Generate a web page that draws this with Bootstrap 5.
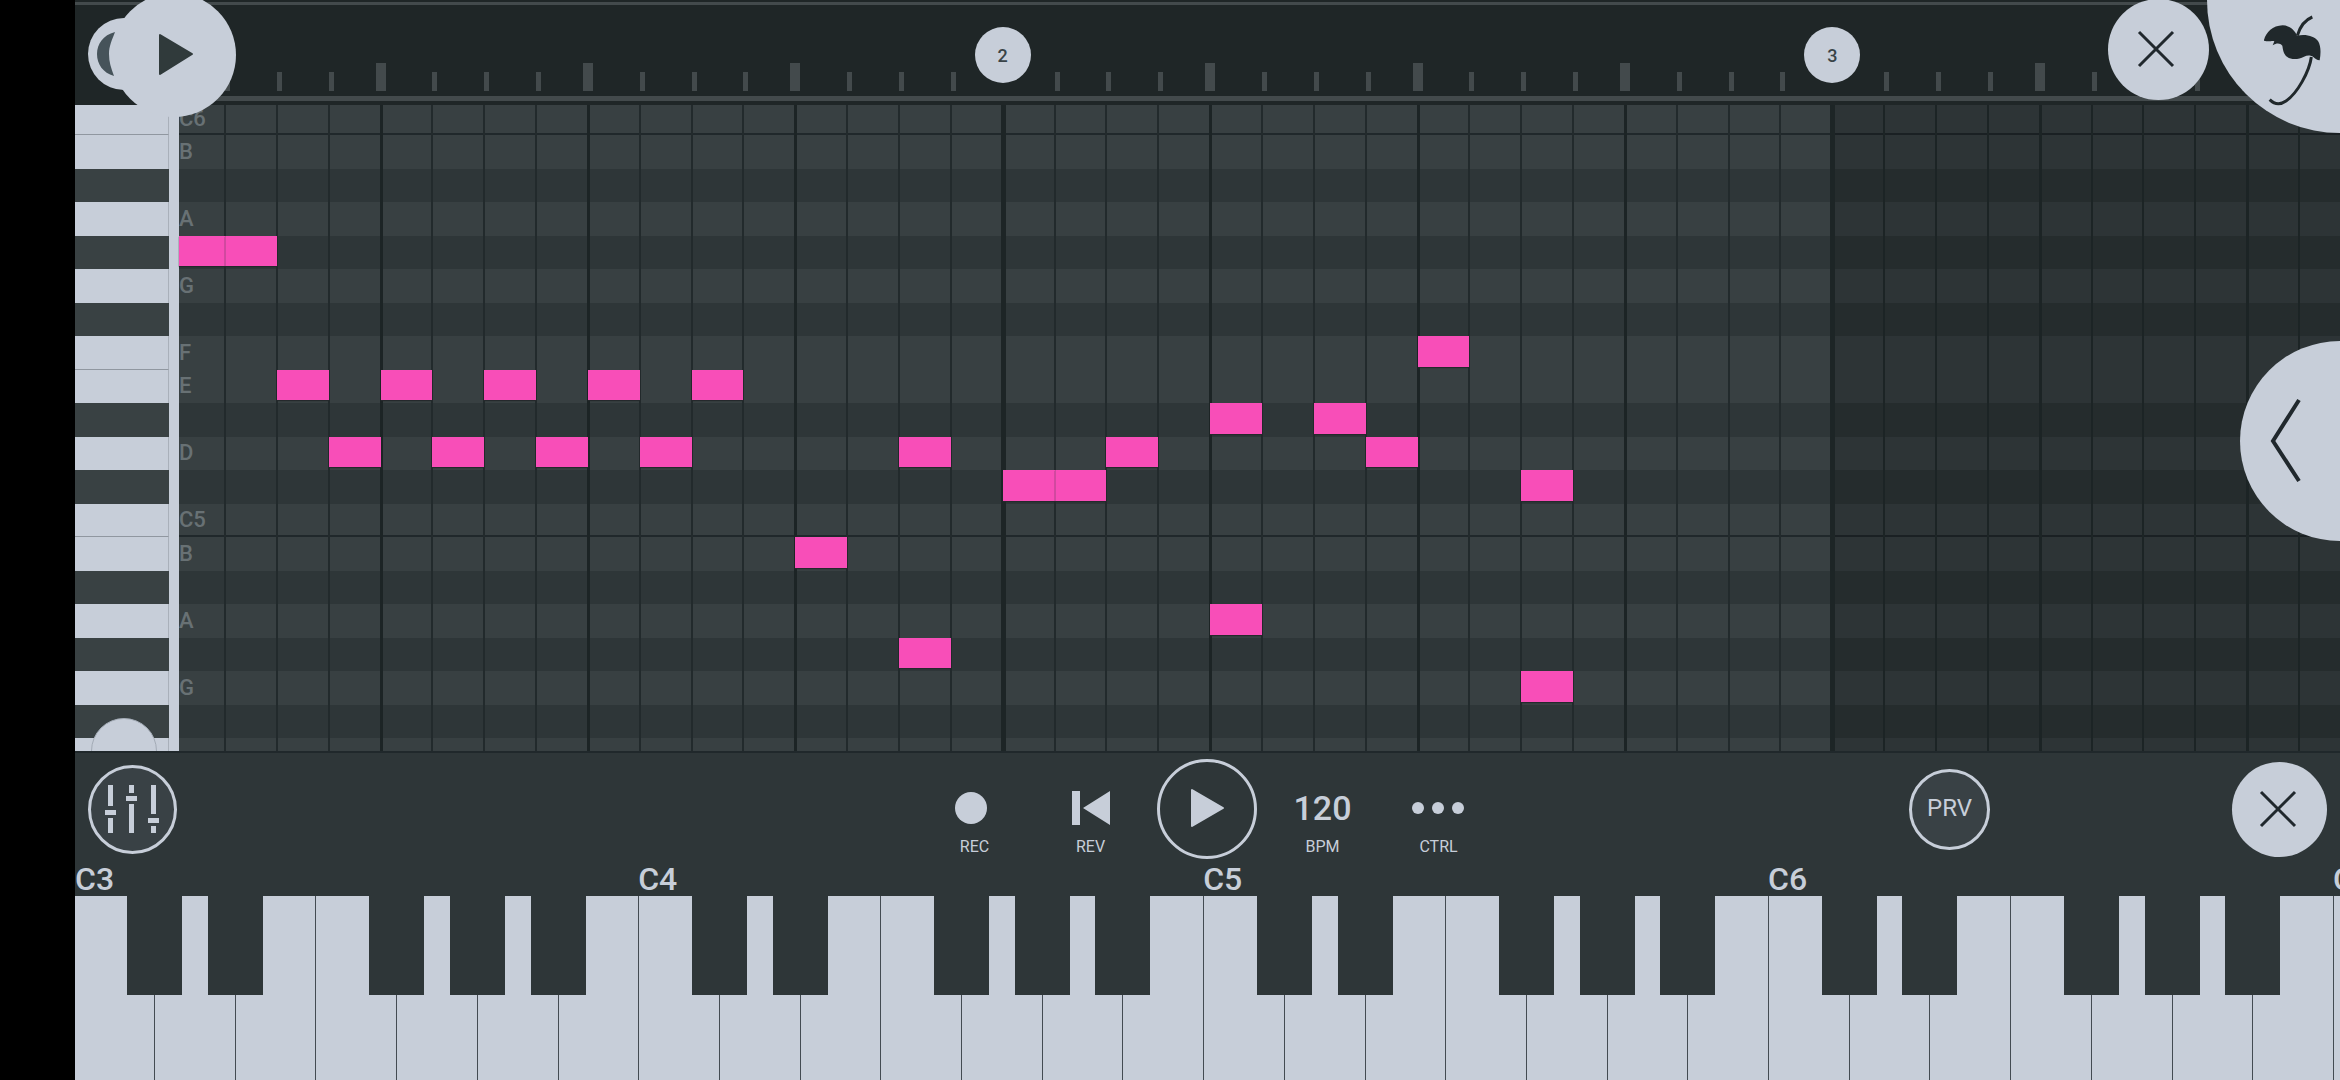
<!DOCTYPE html>
<html lang="en">
<head>
<meta charset="utf-8">
<meta name="viewport" content="width=device-width, initial-scale=1">
<title>Piano roll</title>
<link href="https://cdn.jsdelivr.net/npm/bootstrap@5.3.0/dist/css/bootstrap.min.css" rel="stylesheet">
<style>
:root{--light:#c7ced9;--panel:#2e3638;--ink:#20282b;--line:#434a4c;--row:#384042;--pink:#f84eb8}
body{background:#000;font-family:Roboto,"Liberation Sans",sans-serif;color:var(--light)}
.app{padding-left:75px;overflow:hidden}
button{border:0;padding:0;background:none;color:inherit}
.disc{border-radius:50%;background:var(--light);color:var(--ink)}
svg{display:block}

/* ruler and note grid share one set of columns */
.steps{display:grid;grid-template-columns:46px repeat(40,minmax(0,1fr)) 41px}
.pitches{display:grid;grid-template-rows:30px repeat(18,minmax(0,1fr)) 13px}
.timebar{height:105px;background:#1f2627;padding:2px 0 4px;z-index:3}
.timebar-in{border-top:3px solid var(--line)}
.ruler{margin-left:104px;border-bottom:5px solid var(--line);padding-bottom:5px}
.tick{grid-row:1;align-self:end;width:5px;height:19px;background:var(--line)}
.tick.beat{width:10px;height:28px;margin-left:-5px}
.bar-mark{grid-row:1;width:56px;height:56px;margin:22px 0 0 -28px;font-size:18px;font-weight:500;color:#394347;z-index:1}
.loop-mark{left:13px;top:18px;width:72px;height:72px}
.play-float{left:37px;top:-7px;width:124px;height:124px;z-index:4}
.close-float{right:131px;top:-1px;width:101px;height:101px;z-index:4}
.help-float{right:-133px;top:-133px;width:266px;height:266px;z-index:5}
.side-float{right:-100px;top:236px;width:200px;height:200px;z-index:2}

.strip{width:104px;border-right:10px solid var(--light);flex:none;overflow:hidden}
.side-key{background:var(--light);border-right:1px solid #a9b0ba}
.side-key.sharp{background:#394143;border-right:0}
.side-key.joint{border-bottom:1px solid #9097a0}
.scroll-knob{left:16px;bottom:-33px;width:66px;height:66px;border:1px solid #a3abb6}
.lane{grid-column:1/-1;background:var(--row);font-size:22px;font-weight:500;line-height:31px;padding-bottom:2px;color:#687174}
.lane.edge{line-height:28px}
.lane:empty{padding:0}
.lane.sharp{background:var(--panel)}
.lane.octave{box-shadow:inset 0 -2px var(--ink)}
.outside{grid-column:33/-1;grid-row:1/-1;background:rgba(0,0,0,.18);z-index:1}
.stepline{grid-row:1/-1;width:2px;margin-left:-1px;background:#222a2c;z-index:1}
.stepline.far{background:#1c2425}
.stepline.beat{width:3px;background:#1c2425}
.stepline.bar{width:5px;margin-left:-2px;background:#1d2526}
.note{background:var(--pink);margin-bottom:3px;z-index:2;box-shadow:0 1px 1px #25292c}
.note.joined{border-left:1px solid #cf4a9f}

.tools{border-top:2px solid var(--ink);padding:6px 13px 4px 11px;background:var(--panel);display:grid;grid-template-columns:1fr auto 1fr}
.cluster{height:100px}
.transport{width:116px;height:100px;padding-top:22px;font-size:16px;line-height:24px}
.transport .face{height:54px;font-size:34px}
.tempo{font-weight:500}
.ring{border:3px solid var(--light);border-radius:50%}
.mixer{width:89px;height:89px;margin-left:2px;background:#394145}
.play{width:100px;height:100px}
.preview{width:81px;height:81px;margin-right:242px;background:#394145;font-size:24px;padding-bottom:2px}
.close-keys{width:95px;height:95px}

.keyboard{display:grid;grid-template-columns:79px repeat(27,minmax(0,1fr)) 7px;grid-template-rows:33px 184px;background:var(--panel)}
.oct{font-size:32px;line-height:33px;font-weight:500;white-space:nowrap}
.ivory{grid-row:2;background:var(--light);border-left:1px solid #434b52}
.ivory:nth-of-type(1){border-left:0}
.ebony{grid-row:2;justify-self:end;width:55px;height:99px;margin-right:-28px;background:var(--panel);z-index:1}
</style>
<script src="https://cdn.jsdelivr.net/npm/bootstrap@5.3.0/dist/js/bootstrap.bundle.min.js"></script>
</head>
<body>
<main class="app min-vh-100 d-flex flex-column position-relative">
  <header class="timebar position-relative d-flex">
    <div class="timebar-in flex-grow-1 d-flex flex-column">
      <div class="ruler steps flex-grow-1" id="ruler"></div>
    </div>
    <div class="loop-mark disc position-absolute">
      <svg width="72" height="72" viewBox="0 0 72 72" aria-hidden="true"><path d="M27 14C15 17 9 26 9 36s6 19 17 22c-3-8-5-14-5-22s3-14 6-22z" fill="#46535a"/></svg>
    </div>
    <button class="play-float disc position-absolute" aria-label="Play pattern">
      <svg width="124" height="124" viewBox="0 0 124 124"><path d="M48 42v39l32-20z" fill="#303a3b" stroke="#303a3b" stroke-width="2" stroke-linejoin="round"/></svg>
    </button>
    <button class="close-float disc position-absolute" aria-label="Close editor">
      <svg width="101" height="101" viewBox="0 0 101 101"><path d="M31 33l34 34M65 33L31 67" stroke="#20282d" stroke-width="3"/></svg>
    </button>
    <button class="help-float disc position-absolute" aria-label="Menu">
      <svg width="266" height="266" viewBox="0 0 266 266"><g transform="translate(43 138) scale(.33333)">
        <path d="M42 105C48 82 68 62 98 61C120 62 134 76 141 92C168 86 194 94 204 108C213 122 213 145 209 166C201 166 196 161 190 156C182 150 172 150 162 155C146 164 124 165 112 156C100 147 99 133 97 122C90 114 80 114 68 121L73 109C66 105 60 112 42 107Z" fill="#20282b"/>
        <path d="M142 92C149 68 162 46 187 36M184 156C178 200 142 265 108 288C88 302 72 297 59 284" fill="none" stroke="#20282b" stroke-width="9"/>
      </g></svg>
    </button>
  </header>

  <section class="flex-grow-1 d-flex position-relative overflow-hidden">
    <div class="strip position-relative pitches" id="strip"></div>
    <div class="flex-grow-1 steps pitches" id="roll"></div>
    <button class="side-float disc position-absolute" aria-label="Open side panel">
      <svg width="200" height="200" viewBox="0 0 200 200"><path d="M59 59L33 100l26 40" fill="none" stroke="#20282d" stroke-width="4"/></svg>
    </button>
  </section>

  <section class="tools">
    <div class="cluster d-flex align-items-center">
      <button class="ring mixer" aria-label="Mixer">
        <svg width="83" height="83" viewBox="0 0 83 83" fill="#c7ced9"><path d="M17 17h5v21h-5zM14 42h11v5H14zM17 50h5v15h-5zM38 17h5v8h-5zM35 28h11v5H35zM38 36h5v29h-5zM60 17h5v29h-5zM57 50h11v5H57zM60 58h5v7h-5z"/></svg>
      </button>
    </div>
    <div class="cluster d-flex">
      <button class="transport d-flex flex-column align-items-center"><span class="face d-flex align-items-center"><svg width="40" height="34" viewBox="0 0 40 34"><circle cx="16" cy="17" r="16" fill="#c7ced9"/></svg></span>REC</button>
      <button class="transport d-flex flex-column align-items-center"><span class="face d-flex align-items-center"><svg width="38" height="34" viewBox="0 0 38 34" fill="#c7ced9"><path d="M0 0h8v34H0zM38 0v34L11 17z"/></svg></span>REV</button>
      <div class="cluster d-flex justify-content-center px-2"><button class="ring play" aria-label="Play"><svg width="94" height="94" viewBox="0 0 94 94"><path d="M32 28v36l31-18z" fill="#c7ced9" stroke="#c7ced9" stroke-width="2" stroke-linejoin="round"/></svg></button></div>
      <button class="transport d-flex flex-column align-items-center"><span class="face tempo d-flex align-items-center">120</span>BPM</button>
      <button class="transport d-flex flex-column align-items-center"><span class="face d-flex align-items-center"><svg width="54" height="14" viewBox="0 0 54 14" fill="#c7ced9"><circle cx="6" cy="7" r="6"/><circle cx="26" cy="7" r="6"/><circle cx="46" cy="7" r="6"/></svg></span>CTRL</button>
    </div>
    <div class="cluster d-flex align-items-center justify-content-end">
      <button class="ring preview">PRV</button>
      <button class="disc close-keys" aria-label="Close keyboard"><svg width="95" height="95" viewBox="0 0 95 95"><path d="M29 30l34 34M63 30L29 64" stroke="#20282d" stroke-width="3"/></svg></button>
    </div>
  </section>

  <section class="keyboard" id="keyboard" aria-label="Keyboard"></section>
</main>
<script>
const make = (parent, tag, cls, style, text) => {
  const el = document.createElement(tag);
  el.className = cls;
  if (style) el.style.cssText = style;
  if (text) el.textContent = text;
  parent.append(el);
  return el;
};
const $ = id => document.getElementById(id);

// Pitches from top to bottom
const pitches = ['C6','B','A#','A','G#','G','F#','F','E','D#','D','C#','C5','B','A#','A','G#','G','F#',''];
pitches.forEach((p, i) => {
  const sharp = p.includes('#') ? ' sharp' : '';
  const octave = p[0] === 'C' && !sharp ? ' octave' : '';
  const joint = octave || p === 'F' ? ' joint' : '';
  make($('strip'), 'div', 'side-key' + sharp + joint);
  make($('roll'), 'div', 'lane d-flex align-items-end' + sharp + octave + (i ? '' : ' edge'), `grid-row:${i + 1}`, sharp ? '' : p);
});
make($('strip'), 'button', 'scroll-knob disc position-absolute').ariaLabel = 'Scroll keys';
make($('roll'), 'div', 'outside');

for (let c = 2; c <= 42; c++) {
  const kind = (c - 1) % 16 === 0 ? ' bar' : (c - 1) % 4 === 0 ? ' beat' : '';
  make($('roll'), 'div', 'stepline' + kind + (c > 33 ? ' far' : ''), `grid-column:${c}`);
  if (kind !== ' bar') make($('ruler'), 'div', 'tick' + kind, `grid-column:${c}`);
}
[[17, 2], [33, 3]].forEach(([c, n]) =>
  make($('ruler'), 'div', 'bar-mark disc d-flex align-items-center justify-content-center', `grid-column:${c}`, n));

// Notes as [pitch row, step]
[[5,1],[5,2],[9,3],[9,5],[9,7],[9,9],[9,11],[11,4],[11,6],[11,8],[11,10],[11,15],[14,13],[17,15],
 [12,17],[12,18],[11,19],[10,21],[10,23],[11,24],[8,25],[12,27],[16,21],[18,27]].forEach(([r, c], i, all) => {
  const joined = all.some(([r2, c2]) => r2 === r && c2 === c - 1) ? ' joined' : '';
  make($('roll'), 'div', 'note' + joined, `grid-row:${r};grid-column:${c}`);
});

// On-screen keyboard: four octaves and the edge of the next
for (let k = 0; k < 29; k++) {
  const step = k % 7, name = 'CDEFGAB'[step] + (3 + Math.floor(k / 7));
  if (step === 0) make($('keyboard'), 'div', 'oct', `grid-column:${k + 1}`, name);
  make($('keyboard'), 'button', 'ivory', `grid-column:${k + 1}`).ariaLabel = name;
  if (step !== 2 && step !== 6 && k < 28)
    make($('keyboard'), 'button', 'ebony', `grid-column:${k + 1}`).ariaLabel = name + ' sharp';
}
</script>
</body>
</html>
